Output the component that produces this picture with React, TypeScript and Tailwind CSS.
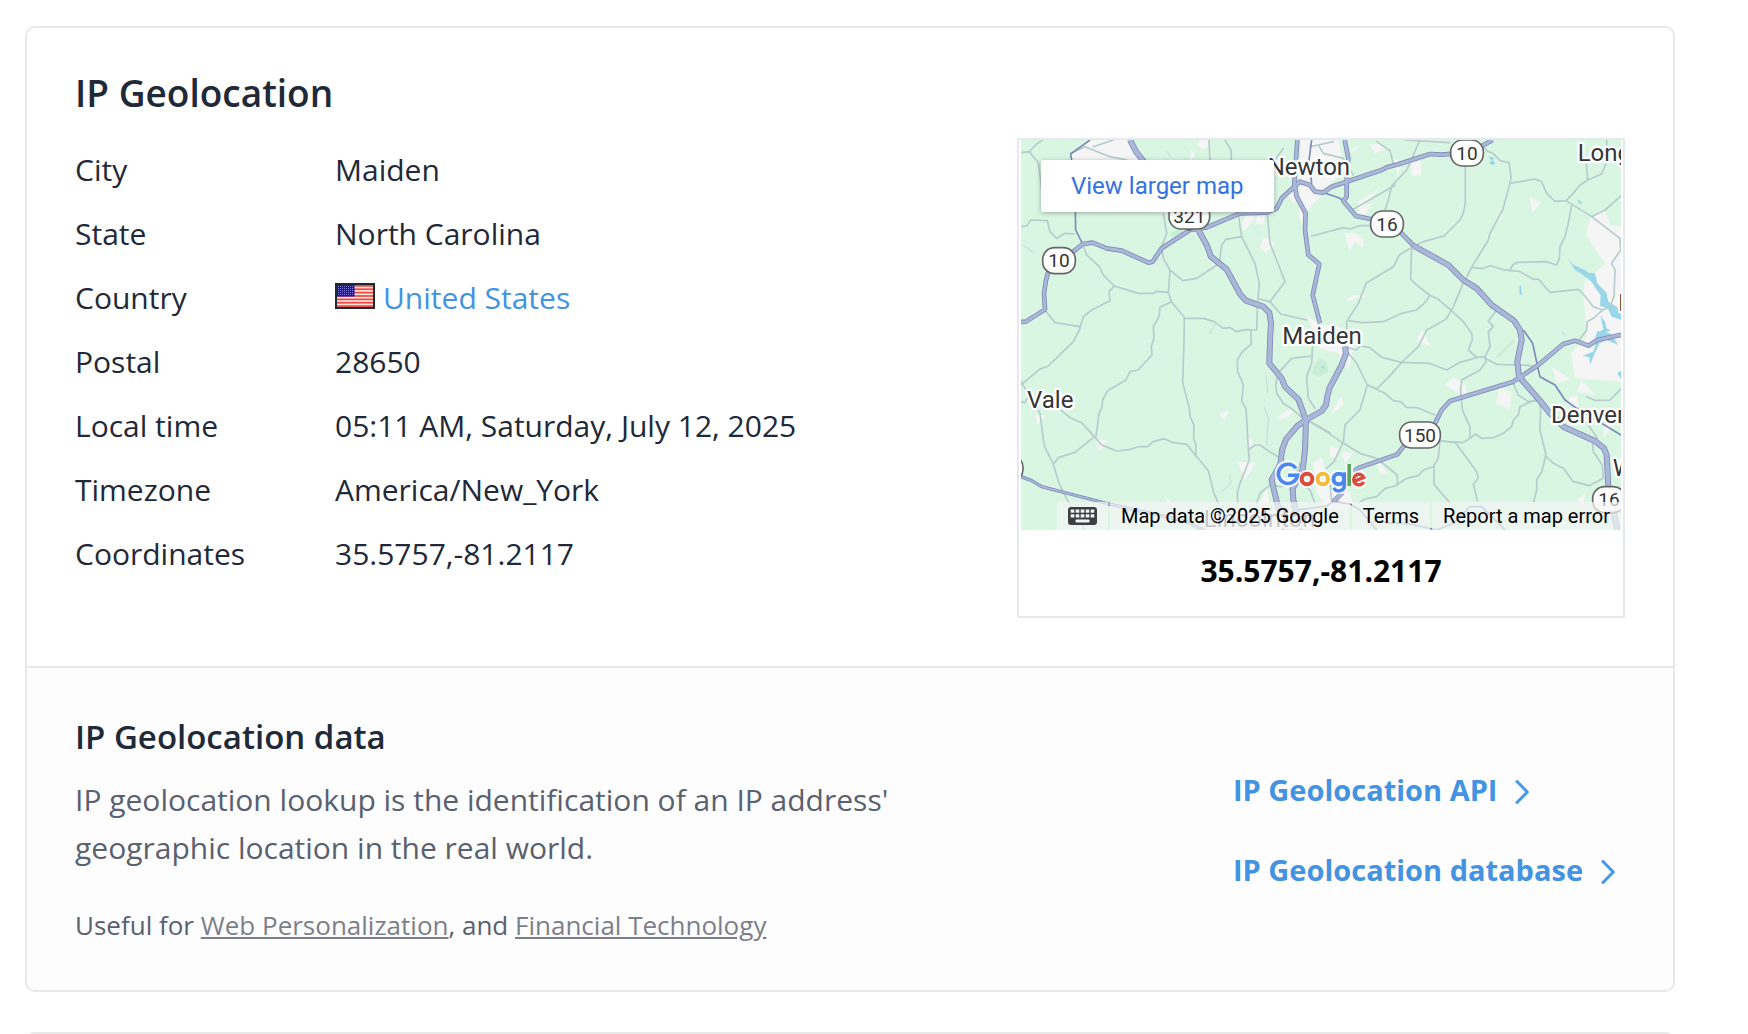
import type { ReactNode } from "react";

const MAJOR = [
  "M360 30L378 65L398 90L440 150L520 250L537 270L565 300L590 345L603 380L650 418L690 492L708 512L760 530L778 548L783 580L780 630L778 700L815 745L825 770L865 808L888 870L885 960L878 1020L848 1075L850 1110L858 1140L880 1210",
  "M888 870L862 888L828 928L816 960L812 1000L785 1050L800 1115L830 1210",
  "M888 870L935 843L948 825L952 800L958 775L995 705L1008 670L1005 650",
  "M1212 348L1315 405L1360 450L1400 475L1445 525L1512 572L1530 600L1535 630L1522 695L1527 740L1590 812L1620 850L1660 890L1755 933L1782 955L1790 975L1795 1070L1822 1200",
];
const MEDIUM = [
  "M930 580L908 495L928 402L895 375L885 300L887 250L860 200L853 160L862 30",
  "M28 576L48 575L105 538L102 490L108 450L115 425L147 393L190 365L218 342L248 338L290 355L335 362L415 398L428 395L455 355L540 300L590 292L690 250L770 248L800 235L815 205L858 165L870 155L900 165L915 185L940 188L965 170L1115 120L1130 112L1165 103L1260 72L1295 74L1370 68L1415 48L1448 30",
  "M1004 30L1015 85L1010 150L1010 200L1000 213L1038 258L1085 268L1130 283L1175 310L1212 348",
  "M1835 614L1762 630L1735 647L1695 632L1660 642L1585 705L1510 755L1320 813L1295 840L1275 880L1230 915L1180 950L1162 973L1050 1012L1020 1030L995 1090L970 1115",
];
const RURAL_ROUTE = "M28 1038L65 1052L95 1070L297 1122L460 1158L530 1175L590 1205";
const MINOR_HIGHWAY = [
  "M830 1155L860 1140L950 1128L970 1115L1020 1122L1050 1140L1100 1200",
  "M1090 1175L1200 1182L1280 1200L1330 1180L1380 1130L1415 1130L1490 1205",
  "M240 30L182 72L185 90L195 180L197 300L218 342",
  "M1540 600L1568 640L1585 720L1590 740L1635 765L1665 810L1700 835L1835 916",
  "M938 187L990 205L1000 213",
  "M905 30L897 90L905 160",
];
const LOCAL_WEST = [
  "M33 68L58 65L80 42L98 30M58 65L85 98L95 180",
  "M182 70L225 50L300 80L350 90M250 50L310 30",
  "M33 290L50 288L62 270L112 272L120 305L140 325L165 310L192 312",
  "M218 342L230 375L268 410L280 435L313 468L385 490L430 490L438 484L475 487L480 420L460 385L455 350L470 310L460 250",
  "M313 468L297 485L300 512L245 540L220 560L208 600L190 635L115 708L88 718L33 765",
  "M105 540L135 578L210 590",
  "M480 420L518 452L560 445L598 420L628 400L635 345L648 328L695 320L690 290L685 250",
  "M475 487L484 515L523 562L522 640L518 757L538 835L540 860L552 885L551 925L558 945L557 978",
  "M484 515L450 532L447 560L430 590L432 625L424 650L426 675L384 720L360 725L348 750L293 782L278 810L275 835L267 850L258 920",
  "M523 565L580 565L612 575L640 595L660 592L678 605L712 598L722 600L724 642L695 668L682 690L683 725L700 765L695 815L708 835L715 955L718 990L690 1060L682 1090L683 1120",
  "M695 320L735 400L748 460L742 530L740 600L720 600",
  "M597 30L600 100M645 30L663 60L665 110M820 55L785 105",
  "M746 507L780 515L825 455L800 390L780 340L772 250",
  "M780 515L812 552L890 570",
  "M33 755L45 775L90 850L102 945L130 1003L147 1060L172 1110L225 1200",
  "M33 815L45 818L55 800M150 838L180 863L215 878L253 920L275 945L320 963L362 958L385 950L412 950L430 935L463 926L490 938L530 943L558 978L595 1022L612 1090L625 1120",
  "M253 920L195 967L145 983L130 1003",
  "M718 957L735 945L750 945L778 965L812 985",
  "M808 725L845 685L908 678M908 640L905 700L890 740L895 805L915 835",
  "M805 725L797 765L800 790L820 820L850 840L885 870",
  "M885 870L900 875L960 908",
  "M740 1120L750 1090L780 1065L812 1070",
  "M915 1120L900 1080L865 1055L812 1070",
  "M870 1000L840 1080M960 1060L965 1115",
];
const LOCAL_EAST = [
  "M5 318L100 293L120 297L150 287L180 287",
  "M466 108L466 220L460 250L450 270L402 318L340 335L305 352L268 375L250 410L168 460L145 520L110 575L110 605",
  "M305 350L302 448L320 465L358 495L385 508L422 540L460 575L485 610L487 630L475 660L500 682L525 680",
  "M115 572L155 578L220 575L275 550L320 540L345 518L358 498",
  "M515 48L535 65L550 70L570 92L597 98L603 140L600 160L578 240L540 310L535 330L485 412L455 470L430 530L408 568L350 600L325 650L275 697L235 742L200 777L172 765",
  "M600 160L675 147L695 155L710 190L735 214L768 212L790 190L810 165L833 150L875 132L890 95L890 30M833 150L828 90",
  "M768 212L845 260L930 325L932 360L905 400L915 420L912 500L900 530L878 540L850 565L832 575L830 600L800 640M845 260L885 240L935 196",
  "M785 225L775 280L765 320L750 350L748 385L740 405L708 395L622 397L608 405L600 420",
  "M485 412L515 416L542 407L575 418L600 422L628 424L670 448L685 447L720 487L805 478L822 495L850 530L878 540",
  "M560 540L535 573L550 590L535 605L540 650L525 680L528 695L510 720L455 750L452 780L457 840L480 890L480 925",
  "M525 685L560 703L655 706L680 712",
  "M100 650L140 660L150 648L178 652L215 682L275 697L358 700L410 720L450 697L500 683",
  "M115 670L140 700L172 765L150 840L105 885L100 935L72 995L50 1015",
  "M172 765L225 790L250 812L272 815L290 832L322 833L375 855",
  "M0 875L50 905L100 940L150 970L200 985L262 1035L262 1065",
  "M393 933L458 938L480 925L497 912L515 925L550 923L580 910L605 890L610 870L625 855L630 830L675 810",
  "M610 760L625 795L655 815L685 812L692 835L690 900L708 975L695 1025L680 1050L680 1080L670 1120",
  "M395 933L435 937L460 970L500 1025L505 1045L490 1063L502 1112",
  "M390 933L385 985L370 1010L340 1020L325 1037L290 1045L255 1068L225 1075L200 1100L165 1107L145 1120",
  "M372 1005L372 1063L420 1120",
  "M706 978L730 1000L760 1015L790 1055L838 1067L880 1045L877 1005L850 965L848 940L862 925L835 885L820 865",
  "M935 775L900 810L855 811L830 800",
  "M255 166L130 238M200 35L240 62L252 110M330 30L290 120L245 168L235 210L225 240",
  "M285 30L420 38M0 50L25 45L70 35M25 45L40 70L100 85L130 135",
];
const TOWN_WEST = [
  "M240 30L350 30L385 80L370 130L195 120L182 72Z",
  "M575 25L592 30L597 45L580 60L560 45ZM543 60L556 70L535 110Z",
  "M830 200L858 170L855 220ZM870 165L935 175L925 205L890 245L885 300L866 260Z",
  "M872 30L985 30L1005 120L940 180L870 150Z",
  "M712 250L738 262L700 305L696 280ZM742 258L765 255L760 285L735 280ZM762 320L795 340L768 370L750 350Z",
  "M890 555L930 585L990 590L1030 655L1015 720L985 670L930 655Z",
  "M75 855L108 855L82 885ZM258 930L290 930L270 965ZM628 850L658 842L643 873Z",
  "M800 865L840 835L852 848L808 872ZM715 918L732 945L715 955ZM682 995L738 998L705 1050Z",
  "M465 1098L495 1128L475 1125ZM770 1070L778 1118L740 1140Z",
  "M910 1000L935 980L945 1020L960 1080L1020 1085L1030 1130L960 1140L920 1090Z",
  "M100 540L70 560L68 545ZM440 245L480 245L470 255Z",
];
const TOWN_EAST = [
  "M180 45L210 38L222 60L195 70ZM122 60L148 45L135 65ZM250 85L270 95L265 140ZM305 95L335 95L333 135L305 138Z",
  "M145 215L210 175L155 235L190 215L165 255L145 250Z",
  "M105 310L135 308L160 330L160 353L135 335L118 362Z",
  "M107 515L125 495L175 497L145 503ZM658 198L692 218L668 250ZM580 230L575 265L565 270Z",
  "M842 260L885 240L900 285L935 290L935 755L795 745L782 670L830 620L820 490L825 450L885 402L828 315Z",
  "M402 765L432 740L470 770L468 800ZM570 775L605 785L600 838L556 820Z",
  "M725 710L782 748L740 760ZM815 750L858 795L800 785ZM780 800L802 795L805 830L770 822ZM885 880L905 890L878 925Z",
  "M95 795L100 825L60 855ZM60 950L90 955L80 985L60 980ZM95 965L130 970L105 1000ZM195 985L235 1030L210 1030Z",
  "M335 600L362 648L320 635ZM825 1090L820 1130L800 1110Z",
];
const WATER_EAST = [
  "M773 385L790 405L825 420L835 428L855 430L862 460L890 490L895 515L935 540L935 570L905 560L893 535L870 528L872 495L860 480L845 455L815 432L795 420Z",
  "M872 558L885 575L890 595L902 602L885 607L855 630L858 612L880 598Z",
  "M862 603L900 610L925 645L890 630L868 640L850 680L840 705L838 682L818 677L850 665L860 632Z",
  "M535 80L552 82L548 92L556 98L548 106L538 98L545 92ZM628 468L634 468L635 494L629 494ZM802 208L818 218L808 222ZM755 605L768 618L758 612ZM922 730L935 720L935 752Z",
];
const STREAMS =
  "M470 62L482 82M38 345L70 366M618 580L597 612M660 1035L662 1060L635 1085M768 735L773 790M762 830L775 865L770 945";

const SHIELDS = [
  { x: 147, y: 392, w: 98, n: "10" },
  { x: 538, y: 258, w: 122, n: "321" },
  { x: 1371, y: 69, w: 98, n: "10" },
  { x: 1131, y: 282, w: 98, n: "16" },
  { x: 1230, y: 915, w: 122, n: "150" },
  { x: 1797, y: 1109, w: 98, n: "16" },
  { x: -10, y: 1015, w: 98, n: "" },
];
const PLACES = [
  { x: 773, y: 134, t: "Newton" },
  { x: 817, y: 642, t: "Maiden" },
  { x: 51, y: 833, t: "Vale" },
  { x: 1623, y: 878, t: "Denver" },
  { x: 1703, y: 93, t: "Long" },
  { x: 1808, y: 1037, t: "W" },
  { x: 1824, y: 543, t: "I" },
];

function RoadMap() {
  return (
    <svg
      viewBox="33 30 1800 1170"
      preserveAspectRatio="xMidYMid slice"
      className="block h-full w-full bg-[#d9f6e3]"
      role="img"
      aria-label="Map of Maiden, North Carolina"
    >
      <g fill="#f5f5f6">
        {TOWN_WEST.map((d) => <path key={d} d={d} />)}
        <g transform="translate(900 0)">{TOWN_EAST.map((d) => <path key={d} d={d} />)}</g>
      </g>
      <path d="M930 685L950 695L955 725L925 742L905 730L912 705ZM480 310L520 290L515 325L480 318Z" fill="#c9eed6" />
      <path d="M1455 680L1510 625L1515 635L1470 680Z" fill="#cfeeda" />
      <g fill="#98d6ea">
        <g transform="translate(900 0)">{WATER_EAST.map((d) => <path key={d} d={d} />)}</g>
        <path d="M933 710L942 705L940 716Z" />
      </g>
      <path d={STREAMS} fill="none" stroke="#b3ccc5" strokeWidth="2" />
      <g fill="none" stroke="#b7cccc" strokeWidth="5" strokeLinejoin="round" strokeLinecap="round">
        {LOCAL_WEST.map((d) => <path key={d} d={d} />)}
        <g transform="translate(900 0)">{LOCAL_EAST.map((d) => <path key={d} d={d} />)}</g>
      </g>
      <g fill="none" stroke="#7f8bb6" strokeLinejoin="round">
        {MINOR_HIGHWAY.map((d) => <path key={d} d={d} strokeWidth="5" />)}
        <path d={RURAL_ROUTE} strokeWidth="10" />
        {MEDIUM.map((d) => <path key={d} d={d} strokeWidth="14" />)}
        {MAJOR.map((d) => <path key={d} d={d} strokeWidth="18" />)}
      </g>
      <g fill="none" stroke="#a9b7d8" strokeLinejoin="round">
        <path d={RURAL_ROUTE} strokeWidth="5" />
        {MEDIUM.map((d) => <path key={d} d={d} strokeWidth="9" />)}
        {MAJOR.map((d) => <path key={d} d={d} strokeWidth="13" />)}
      </g>
      {SHIELDS.map((s) => (
        <g key={`${s.x}-${s.y}`}>
          <rect x={s.x - s.w / 2} y={s.y - 39} width={s.w} height="78" rx="36" fill="#fff" stroke="#666" strokeWidth="5" />
          <text x={s.x} y={s.y + 20} textAnchor="middle" fontSize="57" fill="#333" className="font-['Roboto',sans-serif]">
            {s.n}
          </text>
        </g>
      ))}
      <path d="M524 298L538 304L552 298Z" fill="#666" />
      <g fontSize="72" fill="#333538" stroke="#fff" strokeWidth="14" strokeLinejoin="round" paintOrder="stroke" className="font-['Roboto',sans-serif]">
        {PLACES.map((p) => <text key={p.t} x={p.x} y={p.y}>{p.t}</text>)}
        <text x="581" y="1190" fill="#55585b">Lincolnton</text>
      </g>
    </svg>
  );
}

function LogoStrokes() {
  return (
    <>
      <path d="M20.800 8.200A9.600 9.600 0 1 0 22.500 15.300H13" />
    </>
  );
}

function GoogleLogo() {
  return (
    <svg viewBox="0 0 92 34" className="h-[34px] w-[92px]" role="img" aria-label="Google">
      <g fill="none" stroke="#fff" strokeWidth="8" strokeLinejoin="round" opacity="0.8">
        <LogoStrokes />
        <circle cx="32" cy="19" r="5.300" />
        <circle cx="47.800" cy="19" r="5.300" />
        <circle cx="63.800" cy="19" r="5.300" />
        <path d="M69.500 12.500V25A5.700 5.700 0 0 1 59 28.500M74.200 4V26M79.500 21.500L88.800 17.500A5.300 5.300 0 1 0 88.500 22.500" />
      </g>
      <g fill="none" strokeWidth="4">
        <g stroke="#4d86ee" strokeWidth="3.600">
          <LogoStrokes />
        </g>
        <circle cx="32" cy="19" r="5.300" stroke="#dc4c3e" />
        <circle cx="47.800" cy="19" r="5.300" stroke="#f5bb3d" />
        <circle cx="63.800" cy="19" r="5.300" stroke="#4d86ee" />
        <path d="M69.300 12.300V25.200A5.600 5.600 0 0 1 58.800 28" stroke="#4d86ee" strokeWidth="3.400" />
        <path d="M74.200 4V26" stroke="#58a55c" strokeWidth="3.600" />
        <path d="M79.500 21.300L88.800 17.400A5.300 5.300 0 1 0 88.700 22" stroke="#dc4c3e" strokeWidth="3.400" />
      </g>
    </svg>
  );
}

function Keyboard() {
  return (
    <svg viewBox="0 0 29 18" className="h-[18px] w-[29px]" aria-hidden="true">
      <rect width="29" height="18" rx="3" fill="#3c4043" />
      <g fill="#f1f3f4">
        {[2, 7, 12, 17, 22].map((x) => (
          <g key={x}>
            <rect x={x + 0.700} y="2.500" width="3.600" height="3.200" />
            <rect x={x + 0.700} y="7.300" width="3.600" height="3.200" />
          </g>
        ))}
        <rect x="7.500" y="12.600" width="14" height="3" rx="1" />
      </g>
    </svg>
  );
}

function UsFlag() {
  return (
    <svg viewBox="0 0 40 26" className="mb-1 h-[26px] w-10 shrink-0" role="img" aria-label="Flag of the United States">
      <rect width="40" height="26" fill="#1f2937" />
      <rect x="2" y="2" width="36" height="22" fill="#fde3e0" />
      <g fill="#ea4a3f">
        {[0, 1, 2, 3, 4, 5, 6].map((i) => (
          <rect key={i} x="2" y={2 + i * 3.380} width="36" height="1.700" />
        ))}
      </g>
      <rect x="2" y="2" width="17.500" height="11.500" fill="#1a12b8" />
      <g fill="#7f7be0">
        {[4, 6, 8, 10, 12].map((y) => [3, 5, 7, 9, 11, 13, 15, 17].map((x) => <rect key={`${x}-${y}`} x={x} y={y - 1} width="1" height="1" />))}
      </g>
    </svg>
  );
}

function Chevron() {
  return (
    <svg viewBox="0 0 14 24" className="mt-1 h-6 w-[14px]" fill="none" stroke="#4299f0" strokeWidth="3" strokeLinecap="round" strokeLinejoin="round" aria-hidden="true">
      <path d="M2 1.500L12.300 12L2 22.500" />
    </svg>
  );
}

function ProductLink({ children }: { children: ReactNode }) {
  return (
    <a href="#product" className="flex h-12 items-center gap-[18px] text-[29px] font-bold text-[#4393e2]">
      {children}
      <Chevron />
    </a>
  );
}

const ROWS: [string, ReactNode][] = [
  ["City", "Maiden"],
  ["State", "North Carolina"],
  [
    "Country",
    <span className="flex items-center gap-2">
      <UsFlag />
      <a href="#us" className="text-[#4393e2]">United States</a>
    </span>,
  ],
  ["Postal", "28650"],
  ["Local time", "05:11 AM, Saturday, July 12, 2025"],
  ["Timezone", "America/New_York"],
  ["Coordinates", "35.5757,-81.2117"],
];

export default function App() {
  return (
    <main className="h-screen overflow-hidden bg-white pt-[26px] pr-[73px] pl-[25px] font-['Open_Sans',sans-serif] text-[#212939]">
      <section className="overflow-hidden rounded-[10px] border-2 border-[#e8e8e8]">
        <div className="px-12 pt-9 pb-12">
          <h2 className="mb-4 text-[37px] leading-[58px] font-semibold">IP Geolocation</h2>
          <div className="flex items-start justify-between">
            <table className="text-left text-[30px] leading-[40px]">
              <tbody>
                {ROWS.map(([label, value]) => (
                  <tr key={label} className="h-16">
                    <th scope="row" className="w-[260px] p-0 font-normal">{label}</th>
                    <td className="p-0">{value}</td>
                  </tr>
                ))}
              </tbody>
            </table>
            <div className="w-[608px] shrink-0 border-2 border-[#e5e9ed] px-0.5">
              <div className="relative h-[390px] overflow-hidden font-['Roboto',sans-serif]">
                <RoadMap />
                <a href="#map" className="absolute top-5 left-5 flex h-[52px] items-center rounded-xs bg-white px-[30px] text-2xl text-[#3471e3] shadow-[0_1px_5px_rgba(0,0,0,0.3)]">
                  View larger map
                </a>
                <div className="absolute bottom-9 left-[254px]">
                  <GoogleLogo />
                </div>
                <div className="absolute right-0 bottom-0 flex h-7 gap-0.5 text-xl text-black">
                  <button type="button" aria-label="Keyboard shortcuts" className="flex items-center bg-[#f5f5f5]/70 px-[11px]">
                    <Keyboard />
                  </button>
                  <span className="flex items-center bg-[#f5f5f5]/70 px-[11px]">Map data ©2025 Google</span>
                  <a href="#terms" className="flex items-center bg-[#f5f5f5]/70 px-[11px]">Terms</a>
                  <a href="#report" className="flex items-center bg-[#f5f5f5]/70 px-[11px]">Report a map error</a>
                </div>
              </div>
              <p className="pt-4.5 pb-5.5 text-center text-[30px] leading-[46px] font-bold text-black">35.5757,-81.2117</p>
            </div>
          </div>
        </div>
        <div className="flex items-start justify-between border-t-2 border-[#e8e8e8] bg-[#fdfdfd] px-12 pt-11 pb-10">
          <div className="max-w-[840px]">
            <h3 className="text-[33px] leading-[50px] font-semibold">IP Geolocation data</h3>
            <p className="mt-3.5 text-[30px] leading-[48px] text-[#596070]">
              IP geolocation lookup is the identification of an IP address' geographic location in the real world.
            </p>
            <p className="mt-7 text-[26px] leading-[50px] text-[#596070]">
              Useful for <a href="#web" className="text-[#7c7f8a] underline">Web Personalization</a>, and{" "}
              <a href="#fintech" className="text-[#7c7f8a] underline">Financial Technology</a>
            </p>
          </div>
          <div className="flex w-[392px] shrink-0 flex-col gap-8 pt-[54px]">
            <ProductLink>IP Geolocation API</ProductLink>
            <ProductLink>IP Geolocation database</ProductLink>
          </div>
        </div>
      </section>
      <section className="mt-10 h-24 rounded-[10px] border-2 border-[#e8e8e8]" />
    </main>
  );
}
